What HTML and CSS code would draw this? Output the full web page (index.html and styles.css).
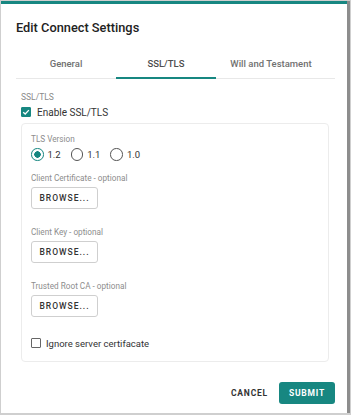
FILE: index.html
```html
<!DOCTYPE html>
<html lang="en">
<head>
    <meta charset="UTF-8">
    <meta name="viewport" content="width=device-width, initial-scale=1.0">
    <title>Edit Connect Settings</title>
    <link rel="stylesheet" href="styles.css">
</head>
<body>
    <div class="dialog">
        <h2 class="dialog-title">Edit Connect Settings</h2>

        <div class="tabs">
            <div class="tab">General</div>
            <div class="tab active">SSL/TLS</div>
            <div class="tab wide">Will and Testament</div>
        </div>

        <div class="section-label">SSL/TLS</div>
        <label class="check">
            <span class="box checked">
                <svg viewBox="0 0 10 10" width="8" height="8"><path d="M1.5 5.2 L4 7.5 L8.6 2.6" fill="none" stroke="#fff" stroke-width="1.6"/></svg>
            </span>
            Enable SSL/TLS
        </label>

        <div class="panel">
            <div class="field-label">TLS Version</div>
            <div class="radios">
                <label class="radio"><span class="dot on"></span>1.2</label>
                <label class="radio"><span class="dot"></span>1.1</label>
                <label class="radio"><span class="dot"></span>1.0</label>
            </div>

            <div class="field-label">Client Certificate - optional</div>
            <button class="browse">BROWSE...</button>

            <div class="field-label">Client Key - optional</div>
            <button class="browse">BROWSE...</button>

            <div class="field-label">Trusted Root CA - optional</div>
            <button class="browse">BROWSE...</button>

            <label class="check small">
                <span class="box"></span>
                Ignore server certifacate
            </label>
        </div>

        <div class="actions">
            <button class="text-btn">CANCEL</button>
            <button class="primary">SUBMIT</button>
        </div>
    </div>
</body>
</html>
```

FILE: styles.css
```css
body {
    margin: 0;
    background: #cfcfcf;
    font-family: Roboto, "Noto Sans", sans-serif;
    color: #333;
}
.dialog {
    box-sizing: border-box;
    width: 346px;
    height: 412px;
    margin: 1px 0 0 1px;
    background: white;
    border-top: 3px solid #178781;
    box-shadow: 3px 0 0 #8d8d8d, 0 1px 0 #9a9a9a;
    padding: 0 12px 0 15px;
}
.dialog-title {
    margin: 0;
    padding-top: 16px;
    font-size: 12.8px;
    line-height: 16px;
    font-weight: 500;
    color: #222;
}
.tabs {
    display: flex;
    margin-top: 12px;
    border-bottom: 1px solid #e8e8e8;
}
.tab {
    box-sizing: border-box;
    width: 100px;
    height: 31px;
    margin-bottom: -1px;
    padding-top: 10px;
    line-height: 12px;
    text-align: center;
    font-size: 9.5px;
    font-weight: 500;
    color: #717171;
}
.tab.wide {
    width: 110px;
}
.tab.active {
    color: #4d4d4d;
    box-shadow: inset 0 -2px 0 #178781;
}
.section-label {
    margin: 13px 0 0 5px;
    font-size: 8.5px;
    line-height: 11px;
    color: #8a8a8a;
}
.check {
    display: flex;
    align-items: center;
    gap: 6px;
    margin: 3px 0 0 5px;
    height: 12px;
    font-size: 10px;
    color: #333;
}
.box {
    box-sizing: border-box;
    width: 10px;
    height: 10px;
    border: 1px solid #666;
    border-radius: 1px;
    display: flex;
    align-items: center;
    justify-content: center;
}
.box.checked {
    background: #178781;
    border-color: #178781;
}
.panel {
    margin: 5px 6px 0 5px;
    border: 1px solid #ececec;
    border-radius: 4px;
    padding: 10px 9px 12px;
}
.field-label {
    font-size: 8.2px;
    line-height: 10px;
    color: #8d8d8d;
    margin-bottom: 4px;
}
.radios {
    display: flex;
    gap: 10px;
    height: 13px;
    margin: 2px 0 12px;
}
.radio {
    display: flex;
    align-items: center;
    gap: 4px;
    font-size: 9.5px;
    color: #333;
}
.dot {
    box-sizing: border-box;
    width: 12.5px;
    height: 12.5px;
    border: 1.3px solid #555;
    border-radius: 50%;
}
.dot.on {
    border-color: #178781;
    background: radial-gradient(circle, #178781 0 3px, transparent 3.5px);
}
.browse {
    display: block;
    width: 67px;
    height: 22px;
    border: 1px solid #cfcfcf;
    border-radius: 3px;
    background: white;
    font-family: Roboto, sans-serif;
    font-size: 8.5px;
    font-weight: 500;
    letter-spacing: 1px;
    color: #333;
    margin-bottom: 18px;
    padding: 0;
}
.check.small {
    margin: 20px 0 0 0;
    font-size: 9.5px;
    gap: 5px;
}
.actions {
    display: flex;
    justify-content: flex-end;
    align-items: center;
    gap: 11px;
    margin-top: 20px;
}
.text-btn {
    border: none;
    background: none;
    font-family: Roboto, sans-serif;
    font-size: 8.5px;
    font-weight: 700;
    letter-spacing: 0.8px;
    color: #333;
    padding: 0;
}
.primary {
    border: none;
    border-radius: 3px;
    background: #178781;
    color: white;
    font-family: Roboto, sans-serif;
    font-size: 8.5px;
    font-weight: 700;
    letter-spacing: 0.8px;
    width: 56px;
    height: 22px;
    padding: 0;
}
```
